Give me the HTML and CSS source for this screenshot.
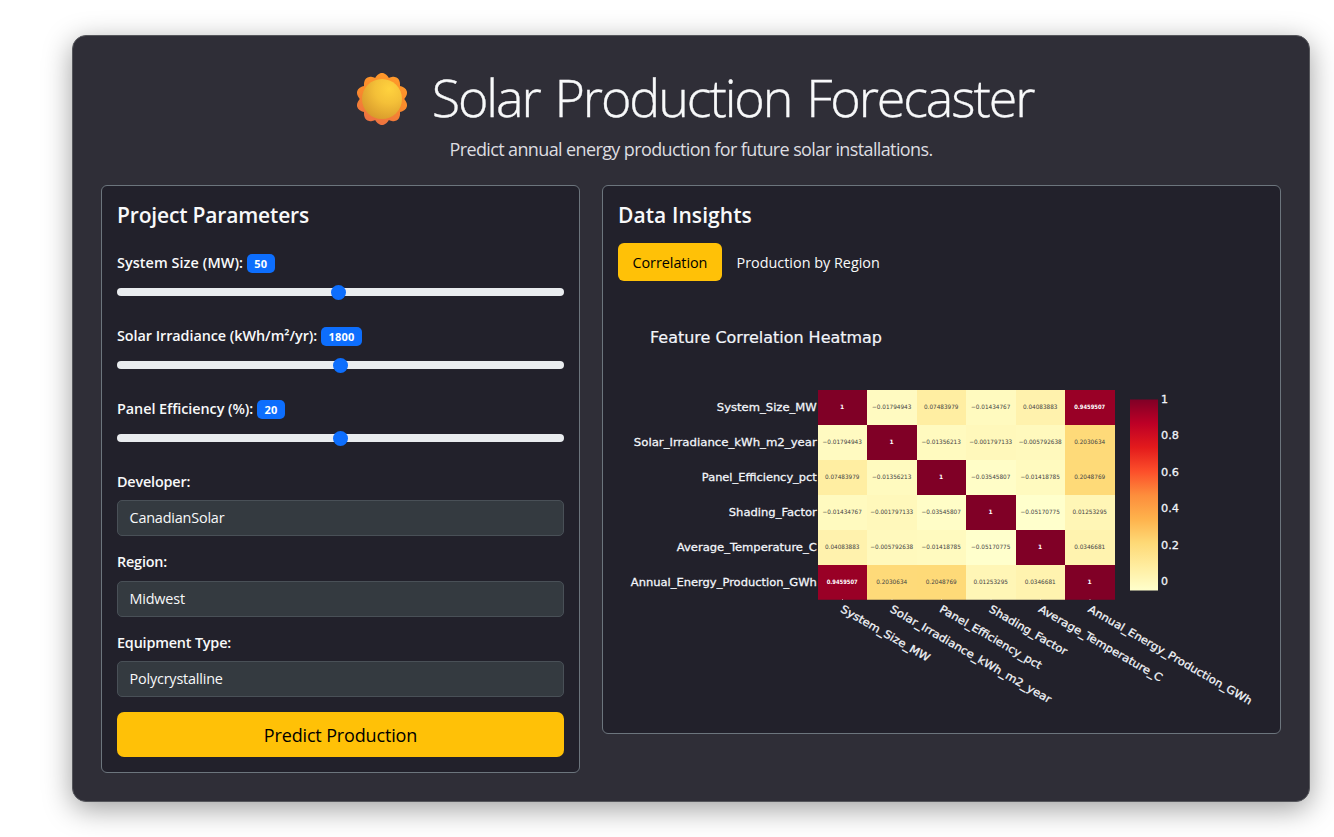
FILE: index.html
```html
<!DOCTYPE html>
<html lang="en">
<head>
<meta charset="utf-8">
<title>Solar Production Forecaster</title>
<link rel="stylesheet" href="styles.css">
</head>
<body>
<main class="app">
  <header class="header">
    <h1 class="title">
      <svg class="sun" viewBox="0 0 52 52" aria-hidden="true">
        <defs>
          <linearGradient id="rays" x1=".7" y1="0" x2=".3" y2="1"><stop offset="0" stop-color="#ff9a2a"/><stop offset=".5" stop-color="#f98a2c"/><stop offset="1" stop-color="#ec6f43"/></linearGradient>
          <radialGradient id="disc" cx=".68" cy=".25" r=".8"><stop offset="0" stop-color="#ffd23e"/><stop offset=".45" stop-color="#f4c038"/><stop offset="1" stop-color="#d99b2c"/></radialGradient>
        </defs>
        <path id="sun-rays" fill="url(#rays)"/>
        <circle cx="26" cy="26" r="20" fill="url(#disc)"/>
      </svg>
      <span class="title-text">Solar Production Forecaster</span>
    </h1>
    <p class="lead">Predict annual energy production for future solar installations.</p>
  </header>
  <div class="columns">
    <section class="card params">
      <h2 class="heading">Project Parameters</h2>
      <div class="slider">
        <div class="label"><span class="l-size">System Size (MW):</span><span class="badge">50</span></div>
        <div class="track"><i class="thumb" style="left:214px"></i></div>
      </div>
      <div class="slider">
        <div class="label"><span>Solar Irradiance (kWh/m²/yr):</span><span class="badge">1800</span></div>
        <div class="track"><i class="thumb" style="left:216px"></i></div>
      </div>
      <div class="slider">
        <div class="label"><span>Panel Efficiency (%):</span><span class="badge">20</span></div>
        <div class="track"><i class="thumb" style="left:216px"></i></div>
      </div>
      <div class="field"><div class="label"><span>Developer:</span></div><div class="select"><span>CanadianSolar</span></div></div>
      <div class="field"><div class="label"><span>Region:</span></div><div class="select"><span>Midwest</span></div></div>
      <div class="field"><div class="label"><span>Equipment Type:</span></div><div class="select"><span>Polycrystalline</span></div></div>
      <button class="predict" type="button"><span>Predict Production</span></button>
    </section>
    <section class="card insights">
      <h2 class="heading">Data Insights</h2>
      <nav class="tabs"><a class="tab active"><span>Correlation</span></a><a class="tab"><span>Production by Region</span></a></nav>
      <svg class="chart" id="chart" viewBox="0 0 647 422">
        <defs>
          <linearGradient id="scale" x1="0" y1="1" x2="0" y2="0">
            <stop offset="0" stop-color="#ffffcc"/><stop offset=".125" stop-color="#ffeda0"/><stop offset=".25" stop-color="#fed976"/><stop offset=".375" stop-color="#feb24c"/><stop offset=".5" stop-color="#fd8d3c"/><stop offset=".625" stop-color="#fc4e2a"/><stop offset=".75" stop-color="#e31a1c"/><stop offset=".875" stop-color="#bd0026"/><stop offset="1" stop-color="#800026"/>
          </linearGradient>
        </defs>
        <text class="chart-title" x="32" y="47" textLength="232" lengthAdjust="spacingAndGlyphs">Feature Correlation Heatmap</text>
        <rect x="512" y="103.5" width="28" height="191" fill="url(#scale)"/>
      </svg>
    </section>
  </div>
</main>
<script src="chart.js"></script>
</body>
</html>
```
FILE: styles.css
```css
* { box-sizing: border-box; }
body { margin: 0; height: 837px; padding: 35px 0 0 72px; background: #fff; font-family: "Open Sans", "Noto Sans", sans-serif; color: #f8f9fa; overflow: hidden; }
.app { width: 1238px; height: 767px; padding: 28px; border: 1px solid #55565b; border-radius: 14px; background: #2f2e37; box-shadow: 0 7px 29px rgba(0, 0, 0, .38); }
.header { height: 121px; }
.title { display: flex; align-items: center; justify-content: center; height: 70px; margin: 0; padding-left: 7px; gap: 24px; font-size: 52px; font-weight: 300; white-space: nowrap; }
.sun { width: 52px; height: 52px; flex: none; }
.title-text { margin-top: -6px; letter-spacing: -2.1px; word-spacing: 3.5px; -webkit-text-stroke: .35px #f8f9fa; }
.lead { margin: 0; height: 30px; line-height: 30px; text-align: center; font-size: 18px; font-weight: 400; letter-spacing: -.62px; color: #dddde0; }
.columns { display: flex; align-items: flex-start; gap: 22px; }
.card { border: 1px solid #6c757d; border-radius: 6px; background: #22212b; padding: 15px; }
.params { width: 479px; height: 588px; }
.insights { width: 679px; height: 549px; }
.heading { display: flex; align-items: center; height: 28px; margin: 0; font-size: 21px; font-weight: 640; letter-spacing: -.17px; white-space: nowrap; }
.insights .heading { letter-spacing: .08px; }
.params .heading { margin-bottom: 22px; }
.slider { height: 73px; }
.label { display: flex; align-items: center; gap: 4px; height: 22px; font-size: 14.4px; font-weight: 600; letter-spacing: -.06px; white-space: nowrap; }
.l-size { letter-spacing: .07px; }
.field .label { letter-spacing: -.18px; }
.badge { height: 19px; margin-top: 2px; line-height: 19px; padding: 0 7.3px; border-radius: 5px; background: #0d6efd; color: #fff; font-size: 11px; font-weight: 700; letter-spacing: .2px; }
.track { position: relative; height: 8px; margin-top: 15px; border-radius: 4px; background: #e9ecef; }
.thumb { position: absolute; top: -3px; width: 15px; height: 15px; border-radius: 50%; background: #0d6efd; }
.field { height: 65.5px; margin-bottom: 15.2px; }
.select { display: flex; align-items: center; height: 36px; margin-top: 8px; padding: 0 0 1px 11.5px; border: 1px solid #495057; border-radius: 5px; background: #343a40; font-size: 14.4px; letter-spacing: -.18px; }
.predict { display: block; width: 100%; height: 45px; padding: 0; border: 0; border-radius: 7px; background: #ffc107; color: #000; font: 400 18px "Open Sans", "Noto Sans", sans-serif; letter-spacing: -.15px; }
.tabs { display: flex; height: 38px; margin-top: 14px; }
.tab { display: flex; align-items: center; padding: 0 14.5px; border-radius: 6px; font-size: 14.4px; white-space: nowrap; }
.tab.active { width: 104px; background: #ffc107; color: #000; letter-spacing: -.05px; }
.chart { display: block; width: 647px; height: 422px; margin-top: 15px; overflow: visible; font-family: "DejaVu Sans", sans-serif; fill: #f2f5fa; }
.chart-title { font-size: 16px; stroke: #f2f5fa; stroke-width: .2px; }
.axis { font-size: 10.8px; stroke: #f2f5fa; stroke-width: .27px; }
.value { font-size: 6px; fill: #444; text-anchor: middle; }
.value.strong { fill: #fff; font-weight: 700; }
```
FILE: chart.js
```js
const NS = 'http://www.w3.org/2000/svg';
const chart = document.getElementById('chart');

function add(tag, attrs, text) {
  const el = document.createElementNS(NS, tag);
  for (const key in attrs) el.setAttribute(key, attrs[key]);
  if (text !== undefined) el.textContent = text;
  chart.appendChild(el);
}

// Feature name, y-axis label width, x-axis label length
const features = [
  ['System_Size_MW', 100, 101],
  ['Solar_Irradiance_kWh_m2_year', 183, 184],
  ['Panel_Efficiency_pct', 115, 116],
  ['Shading_Factor', 88, 88],
  ['Average_Temperature_C', 140, 141],
  ['Annual_Energy_Production_GWh', 186, 187]
];
const values = [
  [1, -0.01794943, 0.07483979, -0.01434767, 0.04083883, 0.9459507],
  [-0.01794943, 1, -0.01356213, -0.001797133, -0.005792638, 0.2030634],
  [0.07483979, -0.01356213, 1, -0.03545807, -0.01418785, 0.2048769],
  [-0.01434767, -0.001797133, -0.03545807, 1, -0.05170775, 0.01253295],
  [0.04083883, -0.005792638, -0.01418785, -0.05170775, 1, 0.0346681],
  [0.9459507, 0.2030634, 0.2048769, 0.01253295, 0.0346681, 1]
];
const stops = [[255,255,204],[255,237,160],[254,217,118],[254,178,76],[253,141,60],[252,78,42],[227,26,28],[189,0,38],[128,0,38]];
const low = -0.05170775;

function color(v) {
  const t = (v - low) / (1 - low) * 8;
  const i = Math.min(7, Math.floor(t));
  return 'rgb(' + stops[i].map((c, k) => Math.round(c + (stops[i + 1][k] - c) * (t - i))).join(',') + ')';
}

const edges = [200, 249, 299, 348, 398, 447, 497];
const top0 = 94;
const adjust = 'spacingAndGlyphs';

values.forEach((row, r) => row.forEach((v, c) => {
  const y = top0 + r * 35;
  add('rect', { x: edges[c], y, width: edges[c + 1] - edges[c], height: 35, fill: color(v), 'shape-rendering': 'crispEdges' });
  const strong = v > 0.9;
  const label = String(v).replace('-', '−');
  const attrs = { class: strong ? 'value strong' : 'value', x: (edges[c] + edges[c + 1]) / 2 - .3, y: y + 19.3 };
  if (label.length > 1) { attrs.textLength = label.length * 3.45 + (v < 0 ? 1.5 : 0); attrs.lengthAdjust = adjust; }
  if (v === 0.9459507) attrs.textLength = 31;
  add('text', attrs, label);
}));
add('rect', { x: 200, y: 303, width: 297, height: 1, fill: '#22212b', opacity: .25 });

features.forEach(([name, w, len], i) => {
  add('text', { class: 'axis', x: 198.8 - w, y: top0 + i * 35 + 20.7, textLength: w, lengthAdjust: adjust }, name);
  const x = (edges[i] + edges[i + 1]) / 2;
  add('rect', { x: x - .5, y: 303, width: 1, height: 1, fill: '#f2f5fa', opacity: .5 });
  add('text', { class: 'axis', transform: `translate(${x - 2.7} 315.3) rotate(30)`, textLength: len, lengthAdjust: adjust }, name);
});

[['1', 7], ['0.8', 18], ['0.6', 18], ['0.4', 18], ['0.2', 18], ['0', 7]].forEach(([t, w], i) =>
  add('text', { class: 'axis', x: 543, y: 107 + i * 36.4, textLength: w, lengthAdjust: adjust }, t));

// Scalloped outline with ten rounded rays
let d = '';
for (let a = 0; a <= 360; a += 2) {
  const rad = (a - 90) * Math.PI / 180;
  const r = 22.2 + 3.8 * Math.abs(Math.cos(a * 5 * Math.PI / 180));
  d += (a ? 'L' : 'M') + (26 + r * Math.cos(rad)).toFixed(2) + ' ' + (26 + r * Math.sin(rad)).toFixed(2);
}
document.getElementById('sun-rays').setAttribute('d', d + 'Z');
```
